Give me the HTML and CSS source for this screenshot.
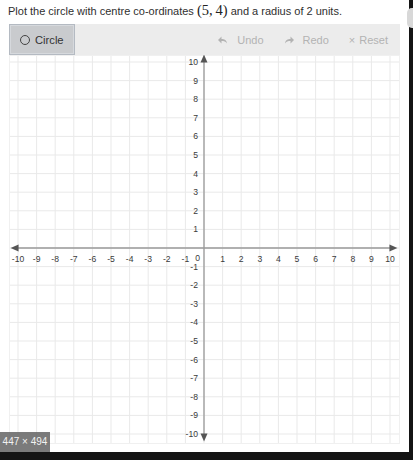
FILE: index.html
```html
<!DOCTYPE html>
<html>
<head>
<meta charset="utf-8">
<link rel="stylesheet" href="styles.css">
</head>
<body>
<div class="page">
  <div class="main">
    <p class="prompt">Plot the circle with centre co-ordinates <span class="math">(5,&thinsp;4)</span> and a radius of 2 units.</p>
    <div class="toolbar">
      <div class="btn-circle"><span class="ring"></span>Circle</div>
      <div class="actions">
        <span class="act"><svg width="10" height="8" viewBox="0 0 10 8"><path d="M9 7.5 C8.5 4 6.5 3 3.5 3 V0.5 L0 4 L3.5 7.5 V5 C6 5 7.8 5.6 9 7.5Z" fill="#b3b3b3"/></svg>Undo</span>
        <span class="act"><svg width="10" height="8" viewBox="0 0 10 8"><path d="M1 7.5 C1.5 4 3.5 3 6.5 3 V0.5 L10 4 L6.5 7.5 V5 C4 5 2.2 5.6 1 7.5Z" fill="#b3b3b3"/></svg>Redo</span>
        <span class="act"><span class="x">×</span>Reset</span>
      </div>
    </div>
    <div class="graph">
      <svg id="g" width="391" height="389" viewBox="0 0 391 389"></svg>
    </div>
  </div>
  <div class="scroll"><span class="knob"></span></div>
  <div class="bottom"></div>
  <div class="badge">447 × 494</div>
</div>
<script src="graph.js"></script>
</body>
</html>
```
FILE: styles.css
```css
html, body { margin: 0; padding: 0; background: #fff; }
.page {
  position: relative;
  width: 413px;
  height: 460px;
  overflow: hidden;
  font-family: "Liberation Sans", Arial, sans-serif;
  color: #333;
}
.main { padding-left: 9px; }
.prompt {
  margin: 0;
  padding: 2px 0 0 0;
  margin-left: -1px;
  height: 22px;
  font-size: 11px;
  line-height: 16px;
  color: #2f2f2f;
}
.math {
  font-family: "Liberation Serif", "Times New Roman", serif;
  font-size: 14.5px;
  color: #222;
}
.toolbar {
  width: 391px;
  height: 31px;
  background: #ececec;
  display: flex;
  align-items: center;
  justify-content: space-between;
}
.btn-circle {
  width: 66px;
  height: 31px;
  box-sizing: border-box;
  background: #c9cbce;
  border: 1px solid #b4bac2;
  box-shadow: inset 0 0 0 1px #d6d9dd;
  display: flex;
  align-items: center;
  padding-left: 10px;
  font-size: 11.2px;
  color: #333;
}
.ring {
  width: 8px;
  height: 8px;
  border: 1.6px solid #444;
  border-radius: 50%;
  margin-right: 5px;
}
.actions {
  display: flex;
  align-items: center;
  gap: 20px;
  padding-right: 12px;
}
.act {
  display: flex;
  align-items: center;
  gap: 9px;
  font-size: 11px;
  color: #b3b3b3;
}
.act .x { font-size: 11px; margin-right: -5px; }
.graph { width: 391px; height: 389px; }
.graph svg { display: block; }
.scroll {
  position: absolute;
  right: 0;
  top: 0;
  width: 4px;
  height: 460px;
  background: #141414;
}
.knob {
  position: absolute;
  top: 8px;
  left: -2px;
  width: 8px;
  height: 20px;
  border-radius: 5px 0 0 5px;
  background: #d8d8d8;
}
.bottom {
  position: absolute;
  left: 0;
  bottom: 0;
  width: 413px;
  height: 8px;
  background: #141414;
}
.badge {
  position: absolute;
  left: 0;
  bottom: 8px;
  width: 50px;
  height: 20px;
  background: rgba(100,100,100,0.85);
  color: #f2f2f2;
  font-size: 10px;
  line-height: 20px;
  text-align: center;
}
```
FILE: graph.js
```js
(function(){
  var svg = document.getElementById('g');
  var NS = 'http://www.w3.org/2000/svg';
  var ox = 195, oy = 193, u = 18.6;
  function el(n, a){ var e = document.createElementNS(NS, n); for (var k in a) e.setAttribute(k, a[k]); svg.appendChild(e); return e; }
  var W = 391, H = 389;
  for (var k = -10; k <= 10; k++) {
    var x = ox + k*u, y = oy - k*u;
    el('line', {x1:x, y1:0, x2:x, y2:H, stroke:'#e9e9e9', 'stroke-width':1});
    el('line', {x1:0, y1:y, x2:W, y2:y, stroke:'#e9e9e9', 'stroke-width':1});
  }
  el('rect', {x:0.5, y:0.5, width:W-1, height:H-1, fill:'none', stroke:'#f0f0f0'});
  var L = 10.4*u;
  el('line', {x1:ox-L+4, y1:oy, x2:ox+L-4, y2:oy, stroke:'#9a9a9a', 'stroke-width':1.3});
  el('line', {x1:ox, y1:oy-L+4, x2:ox, y2:oy+L-4, stroke:'#9a9a9a', 'stroke-width':1.3});
  var c = '#555';
  el('path', {d:'M'+(ox+L)+' '+oy+' l-8 -3.5 v7z', fill:c});
  el('path', {d:'M'+(ox-L)+' '+oy+' l8 -3.5 v7z', fill:c});
  el('path', {d:'M'+ox+' '+(oy-L)+' l-3.5 8 h7z', fill:c});
  el('path', {d:'M'+ox+' '+(oy+L)+' l-3.5 -8 h7z', fill:c});
  function t(s, x, y, anchor){ var e = el('text', {x:x, y:y, 'text-anchor':anchor, 'font-size':'8.6', 'font-family':'Liberation Sans, Arial, sans-serif', fill:'#3a3a3a'}); e.textContent = s; }
  for (var k = -10; k <= 10; k++) {
    if (k === 0) continue;
    t(String(k), ox + k*u, oy + 14, 'middle');
    t(String(k), ox - 6, oy - k*u + 3, 'end');
  }
  t('0', ox - 4, oy + 13, 'end');
})();
```
